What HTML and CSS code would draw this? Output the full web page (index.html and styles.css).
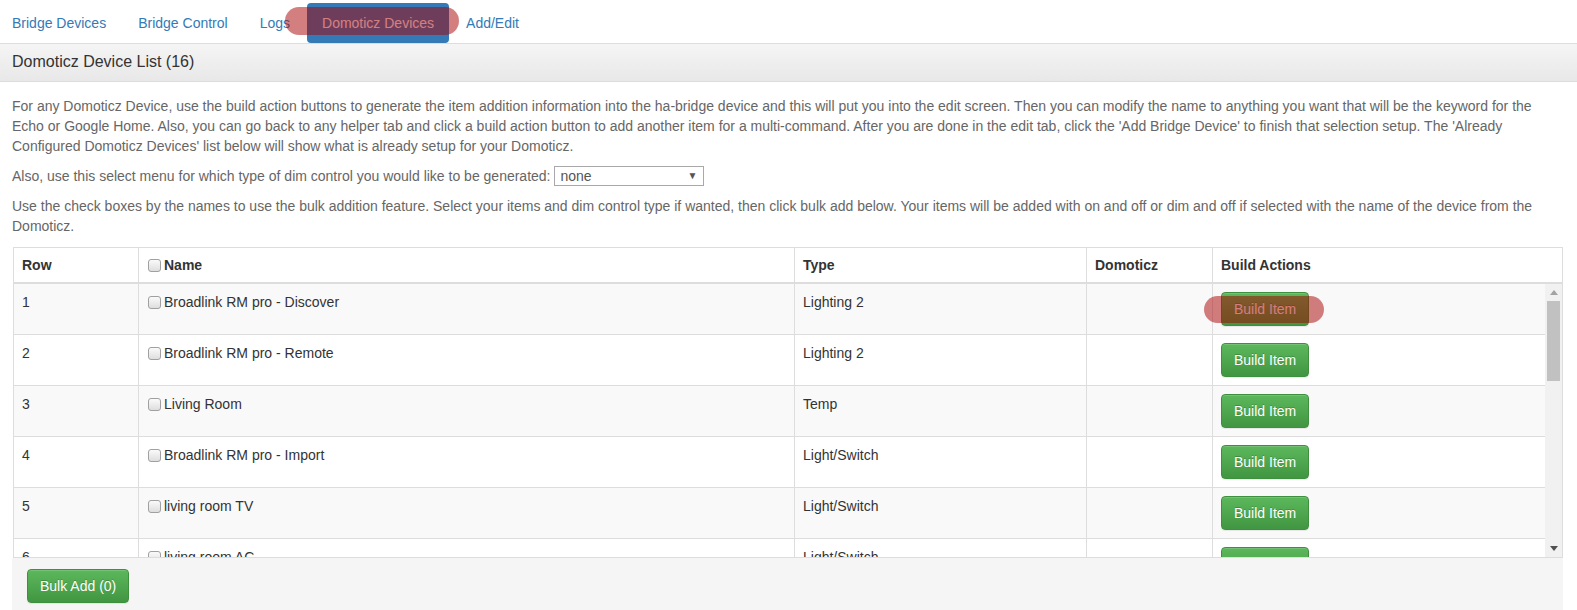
FILE: index.html
```html
<!DOCTYPE html>
<html>
<head>
<meta charset="utf-8">
<title>Domoticz Devices</title>
<link rel="stylesheet" href="styles.css">
</head>
<body>
<nav class="tabs">
  <ul class="pills">
    <li><a href="#">Bridge Devices</a></li>
    <li><a href="#">Bridge Control</a></li>
    <li><a href="#">Logs</a></li>
    <li class="active"><a href="#">Domoticz Devices</a></li>
    <li><a href="#">Add/Edit</a></li>
  </ul>
</nav>
<section class="panel">
  <div class="panel-heading">Domoticz Device List (16)</div>
  <div class="panel-body">
    <p class="intro">For any Domoticz Device, use the build action buttons to generate the item addition information into the ha-bridge device and this will put you into the edit screen. Then you can modify the name to anything you want that will be the keyword for the Echo or Google Home. Also, you can go back to any helper tab and click a build action button to add another item for a multi-command. After you are done in the edit tab, click the 'Add Bridge Device' to finish that selection setup. The 'Already Configured Domoticz Devices' list below will show what is already setup for your Domoticz.</p>
    <p class="intro">Also, use this select menu for which type of dim control you would like to be generated: <span class="select-box"><select class="dim-select"><option>none</option><option>percent</option><option>byte</option></select></span></p>
    <p class="intro last">Use the check boxes by the names to use the bulk addition feature. Select your items and dim control type if wanted, then click bulk add below. Your items will be added with on and off or dim and off if selected with the name of the device from the Domoticz.</p>

    <div class="grid">
      <table class="grid-head">
        <colgroup><col class="c-row"><col class="c-name"><col class="c-type"><col class="c-dom"><col class="c-act"></colgroup>
        <thead>
          <tr>
            <th>Row</th>
            <th><input type="checkbox" class="cb">Name</th>
            <th>Type</th>
            <th>Domoticz</th>
            <th>Build Actions</th>
          </tr>
        </thead>
      </table>
      <div class="grid-bodywrap">
        <div class="grid-scroll">
          <table class="grid-body">
            <colgroup><col class="c-row"><col class="c-name"><col class="c-type"><col class="c-dom"><col class="c-act-b"></colgroup>
            <tbody>
              <tr><td>1</td><td><input type="checkbox" class="cb">Broadlink RM pro - Discover</td><td>Lighting 2</td><td></td><td><button class="btn">Build Item</button></td></tr>
              <tr><td>2</td><td><input type="checkbox" class="cb">Broadlink RM pro - Remote</td><td>Lighting 2</td><td></td><td><button class="btn">Build Item</button></td></tr>
              <tr><td>3</td><td><input type="checkbox" class="cb">Living Room</td><td>Temp</td><td></td><td><button class="btn">Build Item</button></td></tr>
              <tr><td>4</td><td><input type="checkbox" class="cb">Broadlink RM pro - Import</td><td>Light/Switch</td><td></td><td><button class="btn">Build Item</button></td></tr>
              <tr><td>5</td><td><input type="checkbox" class="cb">living room TV</td><td>Light/Switch</td><td></td><td><button class="btn">Build Item</button></td></tr>
              <tr><td>6</td><td><input type="checkbox" class="cb">living room AC</td><td>Light/Switch</td><td></td><td><button class="btn">Build Item</button></td></tr>
              <tr><td>7</td><td><input type="checkbox" class="cb">living room Fan</td><td>Light/Switch</td><td></td><td><button class="btn">Build Item</button></td></tr>
              <tr><td>8</td><td><input type="checkbox" class="cb">Kitchen Light</td><td>Light/Switch</td><td></td><td><button class="btn">Build Item</button></td></tr>
              <tr><td>9</td><td><input type="checkbox" class="cb">Bedroom Light</td><td>Light/Switch</td><td></td><td><button class="btn">Build Item</button></td></tr>
              <tr><td>10</td><td><input type="checkbox" class="cb">Bedroom</td><td>Temp</td><td></td><td><button class="btn">Build Item</button></td></tr>
              <tr><td>11</td><td><input type="checkbox" class="cb">Hallway Light</td><td>Light/Switch</td><td></td><td><button class="btn">Build Item</button></td></tr>
              <tr><td>12</td><td><input type="checkbox" class="cb">Garden Lights</td><td>Lighting 2</td><td></td><td><button class="btn">Build Item</button></td></tr>
              <tr><td>13</td><td><input type="checkbox" class="cb">Garage Door</td><td>Light/Switch</td><td></td><td><button class="btn">Build Item</button></td></tr>
              <tr><td>14</td><td><input type="checkbox" class="cb">Outside</td><td>Temp</td><td></td><td><button class="btn">Build Item</button></td></tr>
              <tr><td>15</td><td><input type="checkbox" class="cb">Office Lamp</td><td>Light/Switch</td><td></td><td><button class="btn">Build Item</button></td></tr>
              <tr><td>16</td><td><input type="checkbox" class="cb">Broadlink RM pro - Learn</td><td>Lighting 2</td><td></td><td><button class="btn">Build Item</button></td></tr>
            </tbody>
          </table>
        </div>
        <div class="vscroll" aria-hidden="true">
          <div class="vs-btn">
            <svg width="8" height="5" viewBox="0 0 8 5"><polygon points="0,5 8,5 4,0" fill="#a3a3a3"/></svg>
          </div>
          <div class="vs-track"><div class="vs-thumb"></div></div>
          <div class="vs-btn">
            <svg width="8" height="5" viewBox="0 0 8 5"><polygon points="0,0 8,0 4,5" fill="#505050"/></svg>
          </div>
        </div>
      </div>
    </div>
    <div class="grid-footer">
      <button class="btn">Bulk Add (0)</button>
    </div>
  </div>
</section>
<div class="mark mark-tab"></div>
<div class="mark mark-btn"></div>
</body>
</html>
```
FILE: styles.css
```css
html, body {
  margin: 0;
  padding: 0;
}
body {
  position: relative;
  width: 1577px;
  height: 610px;
  overflow: hidden;
  background: #fff;
  font-family: "Liberation Sans", Arial, Helvetica, sans-serif;
  font-size: 14px;
  line-height: 20px;
  color: #333;
}

/* nav pills */
.tabs {
  padding-top: 3px;
  height: 40px;
}
.pills {
  display: flex;
  list-style: none;
  margin: 0 0 0 -3px;
  padding: 0;
}
.pills li + li {
  margin-left: 2px;
}
.pills a {
  display: block;
  padding: 10px 15px;
  line-height: 20px;
  color: #337ab7;
  text-decoration: none;
  border-radius: 4px;
}
.pills .active a {
  background: #337ab7;
  color: #fff;
}

/* panel */
.panel-heading {
  border-top: 1px solid #ddd;
  border-bottom: 1px solid #ddd;
  padding: 8px 12px 9px;
  font-size: 16px;
  line-height: 20px;
  color: #333;
  background: linear-gradient(#f5f5f5, #e8e8e8);
}
.panel-body {
  padding: 14px 14px 0 12px;
}
.intro {
  margin: 0 0 10px;
  color: #666;
}
.intro.last {
  margin-bottom: 11px;
}

/* select */
.select-box {
  position: relative;
  display: inline-block;
  vertical-align: bottom;
  height: 20px;
}
.dim-select {
  -webkit-appearance: none;
  appearance: none;
  box-sizing: border-box;
  width: 150px;
  height: 20px;
  margin: 0;
  padding: 0 0 0 5px;
  border: 1px solid #a9a9a9;
  border-radius: 0;
  background: #fff;
  font-family: inherit;
  font-size: 14px;
  color: #555;
  display: block;
}
.select-box::after {
  content: "\25BC";
  position: absolute;
  right: 7px;
  top: 5px;
  font-size: 10px;
  line-height: 10px;
  color: #555;
  pointer-events: none;
}

/* grid */
.grid {
  margin-left: 1px;
  border: 1px solid #ddd;
}
.grid table {
  table-layout: fixed;
  border-collapse: separate;
  border-spacing: 0;
}
.grid-head {
  width: 1548px;
}
.grid-body {
  width: 1531px;
}
.c-row { width: 124px; }
.c-name { width: 656px; }
.c-type { width: 292px; }
.c-dom { width: 126px; }
.c-act { width: 350px; }
.c-act-b { width: 333px; }

.grid th {
  text-align: left;
  font-weight: bold;
  color: #333;
  padding: 7px 8px 7px;
  line-height: 20px;
  border-bottom: 2px solid #ddd;
  background: #fff;
}
.grid th + th,
.grid td + td {
  border-left: 1px solid #ddd;
}
.grid td {
  padding: 8px;
  line-height: 20px;
  vertical-align: top;
  border-bottom: 1px solid #ddd;
  color: #333;
  height: 34px;
}
.grid-body tr:nth-child(odd) td {
  background: #f9f9f9;
}
.grid-bodywrap {
  display: flex;
  height: 273px;
}
.grid-scroll {
  flex: 1;
  overflow: hidden;
}

/* scrollbar drawing */
.vscroll {
  width: 17px;
  flex: none;
  display: flex;
  flex-direction: column;
  background: #f1f1f1;
}
.vs-btn {
  height: 17px;
  display: flex;
  align-items: center;
  justify-content: center;
}
.vs-btn svg {
  display: block;
}
.vs-track {
  flex: 1;
  padding: 0 2px;
}
.vs-thumb {
  height: 80px;
  background: #c1c1c1;
}

/* checkbox */
.cb {
  -webkit-appearance: none;
  appearance: none;
  box-sizing: border-box;
  width: 13px;
  height: 13px;
  margin: 0 3px 0 1px;
  vertical-align: -2px;
  border: 1px solid #a0a0a0;
  border-radius: 3px;
  background: linear-gradient(#fafafa, #dedede);
}

/* buttons */
.btn {
  display: inline-block;
  box-sizing: border-box;
  height: 34px;
  padding: 6px 12px;
  font-family: inherit;
  font-size: 14px;
  line-height: 20px;
  color: #fff;
  text-shadow: 0 -1px 0 rgba(0, 0, 0, 0.2);
  background: linear-gradient(#5cb85c, #419641);
  border: 1px solid #3e8f3e;
  border-radius: 4px;
  box-shadow: inset 0 1px 0 rgba(255, 255, 255, 0.15), 0 1px 1px rgba(0, 0, 0, 0.075);
  cursor: pointer;
}

.grid-footer {
  background: #f5f5f5;
  padding: 11px 15px 10px;
}

/* annotation highlights */
.mark {
  position: absolute;
  background: rgba(170, 0, 0, 0.5);
  border-radius: 14px;
  pointer-events: none;
}
.mark-tab {
  left: 285px;
  top: 7px;
  width: 174px;
  height: 28px;
}
.mark-btn {
  left: 1204px;
  top: 296px;
  width: 120px;
  height: 27px;
}
```
